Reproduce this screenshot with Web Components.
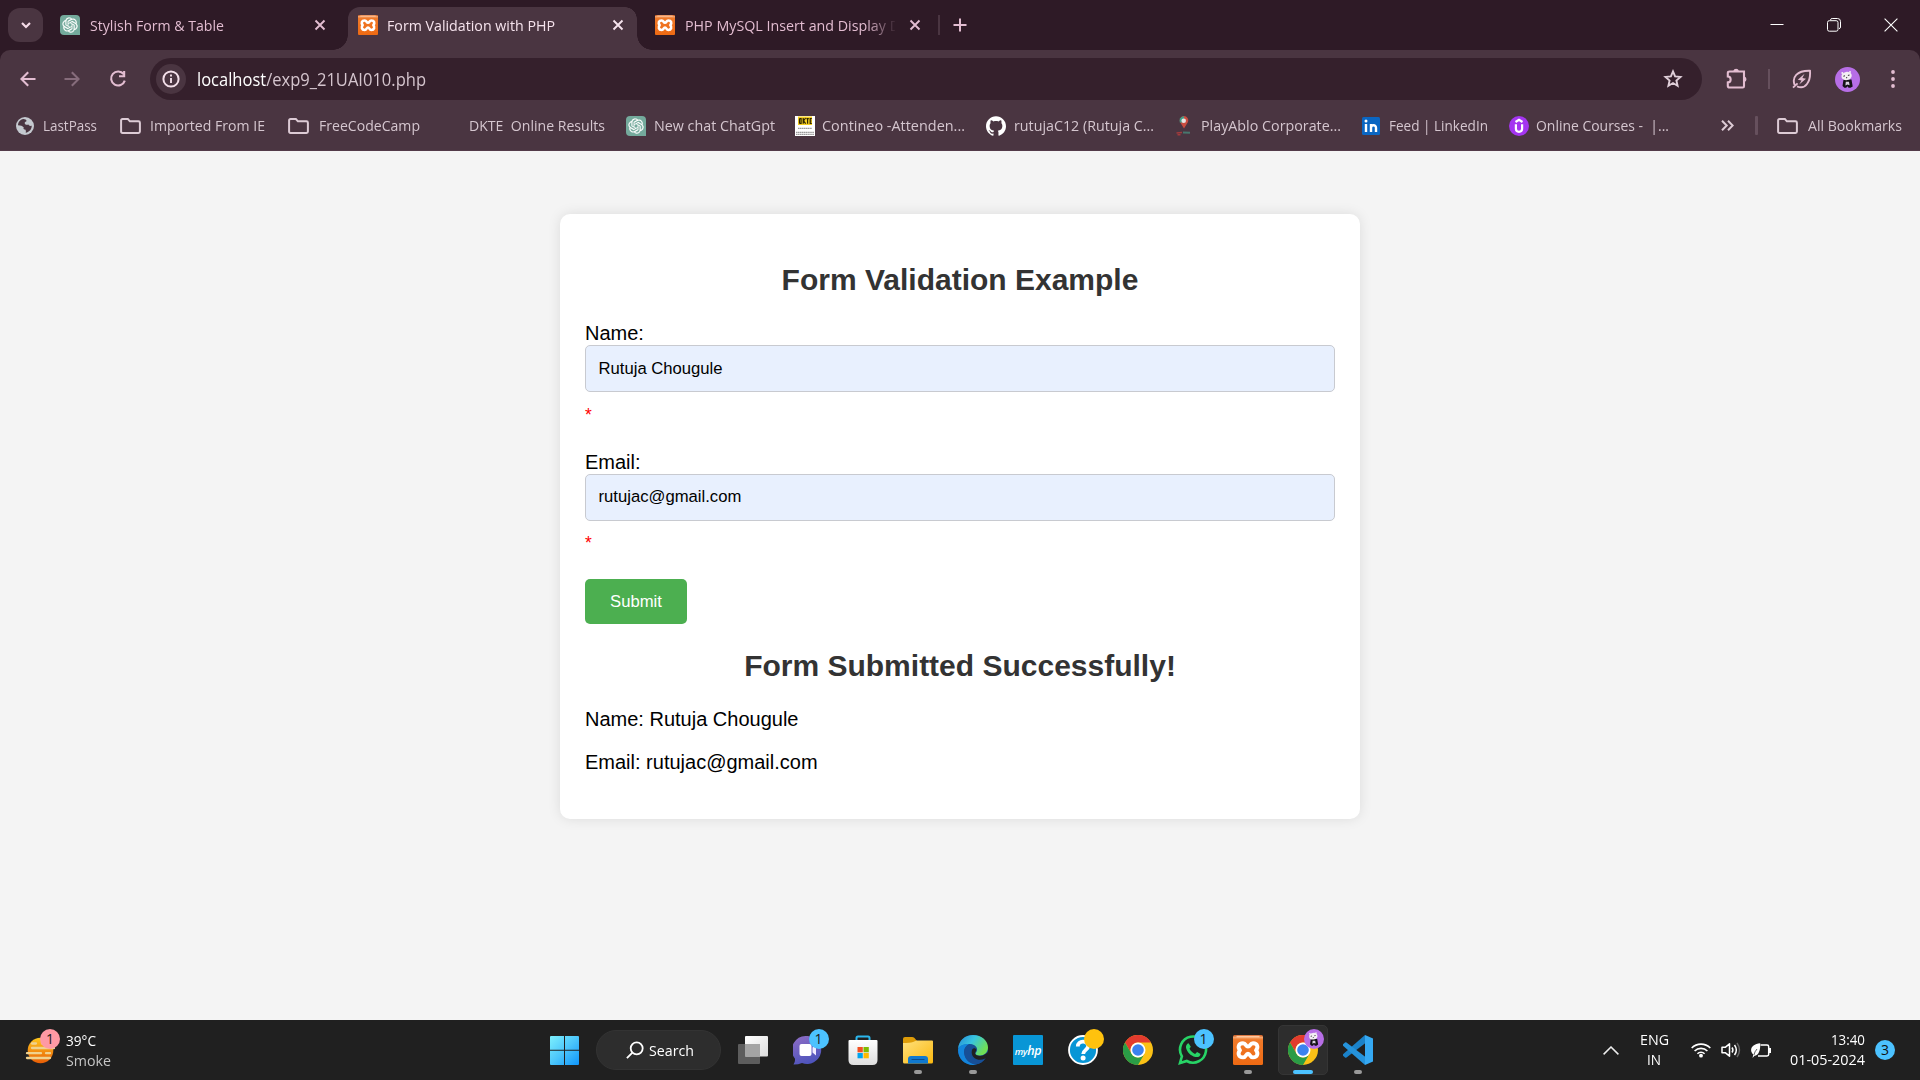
<!DOCTYPE html>
<html lang="en">
<head>
<meta charset="utf-8">
<title>Form Validation with PHP</title>
<style>
html,body{margin:0;height:100%;overflow:hidden;background:#f4f4f4}
</style>
</head>
<body>
<desktop-screen></desktop-screen>
<script>
const openai='M22.2819 9.8211a5.9847 5.9847 0 0 0-.5157-4.9108 6.0462 6.0462 0 0 0-6.5098-2.9A6.0651 6.0651 0 0 0 4.9807 4.1818a5.9847 5.9847 0 0 0-3.9977 2.9 6.0462 6.0462 0 0 0 .7427 7.0966 5.98 5.98 0 0 0 .511 4.9107 6.051 6.051 0 0 0 6.5146 2.9001A5.9847 5.9847 0 0 0 13.2599 24a6.0557 6.0557 0 0 0 5.7718-4.2058 5.9894 5.9894 0 0 0 3.9977-2.9001 6.0557 6.0557 0 0 0-.7475-7.0729zm-9.022 12.6081a4.4755 4.4755 0 0 1-2.8764-1.0408l.1419-.0804 4.7783-2.7582a.7948.7948 0 0 0 .3927-.6813v-6.7369l2.02 1.1686a.071.071 0 0 1 .038.052v5.5826a4.504 4.504 0 0 1-4.4945 4.4944zm-9.6607-4.1254a4.4708 4.4708 0 0 1-.5346-3.0137l.142.0852 4.783 2.7582a.7712.7712 0 0 0 .7806 0l5.8428-3.3685v2.3324a.0804.0804 0 0 1-.0332.0615L9.74 19.9502a4.4992 4.4992 0 0 1-6.1408-1.6464zM2.3408 7.8956a4.485 4.485 0 0 1 2.3655-1.9728V11.6a.7664.7664 0 0 0 .3879.6765l5.8144 3.3543-2.0201 1.1685a.0757.0757 0 0 1-.071 0l-4.8303-2.7865A4.504 4.504 0 0 1 2.3408 7.872zm16.5963 3.8558L13.1038 8.364 15.1192 7.2a.0757.0757 0 0 1 .071 0l4.8303 2.7913a4.4944 4.4944 0 0 1-.6765 8.1042v-5.6772a.79.79 0 0 0-.407-.667zm2.0107-3.0231l-.142-.0852-4.7735-2.7818a.7759.7759 0 0 0-.7854 0L9.409 9.2297V6.8974a.0662.0662 0 0 1 .0284-.0615l4.8303-2.7866a4.4992 4.4992 0 0 1 6.6802 4.66zM8.3065 12.863l-2.02-1.1638a.0804.0804 0 0 1-.038-.0567V6.0742a4.4992 4.4992 0 0 1 7.3757-3.4537l-.142.0805L8.704 5.459a.7948.7948 0 0 0-.3927.6813zm1.0976-2.3654l2.602-1.4998 2.6069 1.4998v2.9994l-2.5974 1.4997-2.6067-1.4997Z';
const svg=(w,h,body,vb)=>`<svg width="${w}" height="${h}" viewBox="${vb||`0 0 ${w} ${h}`}" fill="none">${body}</svg>`;
const xamppArt='<defs><linearGradient id="x" x2="0" y2="1"><stop stop-color="#c9571c"/><stop offset=".08" stop-color="#f5a46c"/><stop offset=".16" stop-color="#f07a2a"/><stop offset="1" stop-color="#ee6a13"/></linearGradient></defs><rect width="30" height="30" rx="1.5" fill="url(#x)"/><path d="M3.5 1.6h23" stroke="#ffc79e" stroke-width="1.6"/><path d="M10 8.2c3.2 0 2.6 3.4 5 3.4s1.800-3.400 5-3.400c4.500 0 5.600 4 3 7 2.600 3 1.500 7.200-3 7.200-3.200 0-2.600-3.600-5-3.600s-1.800 3.600-5 3.600c-4.500 0-5.600-4.200-3-7.200-2.600-3-1.500-7 3-7z" stroke="#fff" stroke-width="3.900" stroke-linejoin="round"/>';
const chromeArt='<circle cx="15" cy="15" r="15" fill="#fbc116"/><path d="M2 7.500A15 15 0 0 1 28 7.500H15a7.500 7.500 0 0 0-6.500 11.250z" fill="#e33b2e"/><path d="M2 7.500A15 15 0 0 0 15 30l6.500-11.250a7.500 7.500 0 0 1-13 0z" fill="#2a9c46"/><circle cx="15" cy="15" r="7.500" fill="#fff"/><circle cx="15" cy="15" r="5.800" fill="#3b82ef"/>';
const pandaArt='<circle cx="12.500" cy="12.500" r="12.500" fill="#b76ee6"/><path d="M8.500 12.500h8l1.200 7-2.200 1.300h-2l-1-1.600-1.300 1.600H9.300L7.500 19z" fill="#151217"/><path d="M10.800 14.800h3.200l.6 3.400-2.200-.6-2 .8z" fill="#d9cfe0"/><ellipse cx="11.600" cy="9" rx="5.200" ry="4.100" transform="rotate(-10 11.600 9)" fill="#f3eef3"/><circle cx="7.300" cy="5.900" r="1" fill="#f3eef3"/><circle cx="15" cy="5" r="1" fill="#f3eef3"/><path d="M8.400 9.200l1.600-.4M12.900 8.400l1.600-.3M11 10.800l1.200-.2" stroke="#151217" stroke-width=".9"/>';
const ICONS={
 down:svg(12,12,'<path d="M2 4l4 4 4-4" stroke="#f5dbe8" stroke-width="2.200"/>'),
 gpt:svg(20,20,`<path d="M4 0h12a4 4 0 0 1 4 4v16H4a4 4 0 0 1-4-4V4a4 4 0 0 1 4-4z" fill="#74aa9c"/><g transform="translate(2.400 2.400) scale(.635)"><path fill="#fff" stroke="#fff" stroke-width=".3" d="${openai}"/></g>`),
 xamppS:svg(20,20,xamppArt,'0 0 30 30'),
 xampp:svg(30,30,xamppArt),
 close:svg(12,12,'<path d="M1.500 1.500l9 9m0-9l-9 9" stroke="currentColor" stroke-width="1.900"/>'),
 plus:svg(14,14,'<path d="M7 .5v13M.5 7h13" stroke="#e3bdd1" stroke-width="2"/>'),
 min:svg(14,14,'<path d="M.5 6.500h13" stroke="#fff"/>'),
 restore:svg(14,14,'<path d="M3.500 2V1.800Q3.800.5 5.200.5H10.500Q13.500.5 13.500 3.500V9Q13.500 10.400 12 10.700" stroke="#fff"/><rect x=".5" y="2.700" width="10.500" height="10.500" rx="1.800" stroke="#fff"/>'),
 winx:svg(14,14,'<path d="M.6.6l12.800 12.800m0-12.800L.6 13.400" stroke="#fff" stroke-width="1.100"/>'),
 back:svg(16,16,'<path d="M15.500 8H1.800M8.200 1.200L1.400 8l6.800 6.800" stroke="#e3bdd1" stroke-width="2.100"/>'),
 fwd:svg(16,16,'<path d="M.5 8h13.700M7.800 1.200L14.600 8l-6.800 6.800" stroke="#866c7b" stroke-width="2.100"/>'),
 reload:svg(18,18,'<path d="M14.700 4.200A7 7 0 1 0 15.800 10.600" stroke="#e3bdd1" stroke-width="2.100"/><path d="M16.200 1v6.300H10V5.200h4.100V1z" fill="#e3bdd1"/>'),
 info:svg(18,18,'<circle cx="9" cy="9" r="7.600" stroke="#f3dfe9" stroke-width="2"/><path d="M9 8v5M9 4.600v2" stroke="#f3dfe9" stroke-width="1.900"/>'),
 star:svg(20,20,'<path d="M10 2.400l2.100 5 5.400.5-4.100 3.600 1.200 5.300-4.600-2.800-4.600 2.800 1.200-5.300L2.500 7.900l5.400-.5z" stroke="#e0cfd9" stroke-width="1.900"/>'),
 puzzle:svg(22,22,'<path d="M3.500 3.500h14.500v14.800q0 1.200-1.200 1.200H3.500q-1.700 0-1.700-1.500v-3.600c3.800-.2 3.800-5.700 0-5.900V4.900q0-1.400 1.700-1.400z" stroke="#e3bdd1" stroke-width="2.100"/><path d="M7.300 3a2.900 2.900 0 0 1 5.600 0zM18.500 8.500a2.900 2.900 0 0 1 0 5.500z" fill="#e3bdd1"/>'),
 leaf:svg(20,20,'<path d="M2.600 15.800C-.2 8.600 4.600 1.400 18 1.800c.8 10.500-4.500 19.500-13 15.500M1 18.600l4.600-4.200" stroke="#e3bdd1" stroke-width="1.900"/><path d="M12.500 4.800L5.800 10.700l3.700.8-2.300 4 6.800-5.700-3.600-.9z" fill="#e3bdd1"/>'),
 panda:svg(25,25,pandaArt),
 dots:svg(4,18,'<circle cx="2" cy="2" r="1.900" fill="#e3bdd1"/><circle cx="2" cy="9" r="1.900" fill="#e3bdd1"/><circle cx="2" cy="16" r="1.900" fill="#e3bdd1"/>'),
 globe:svg(18,18,'<circle cx="9" cy="9" r="9" fill="#c4c9cf"/><path d="M7.500 2.100C3.800 2.700 2.200 5.300 2 8.300c2.800.2 4.400.4 5.800 2.200-.9 1.200 0 2.300 1.800 2.300.2 1 .5 2 .1 3 3.800-.7 6.200-3.800 6-7-1.700.5-3-.2-3.300-1.300-1.700.8-3.800.2-3.700-1.500 0-1.800 2.300-1.200 1.700-2.600-.4-.8-1.500-.8-2.900-1.300z" fill="#4a3541"/>'),
 folder:svg(21,16,'<path d="M1.100 2.500Q1.100 1.100 2.500 1.100h5.400l2 2.200h8.600q1.400 0 1.400 1.400v8.800q0 1.400-1.400 1.400h-16q-1.400 0-1.400-1.400z" stroke="#ddcbd5" stroke-width="2"/>'),
 dkte:svg(20,20,'<rect width="20" height="20" fill="#fff"/><rect x="3" y="0.500" width="14" height="8.500" fill="#f6cf22"/><path d="M4.500 2.500v5M4.500 2.700h1.600v4.600H4.500M8.200 2v5.700M10.600 2L8.500 5l2.200 2.600M11.400 2.700h2.400M12.600 2.700v5M16.800 2.700h-1.600v4.600h1.600M15 5h1.500" stroke="#302600" stroke-width="1.200"/><path d="M3 12.300h14M1 16.300h18M1 18.400h18" stroke="#999" stroke-width="1.200" stroke-dasharray="1.500 .4"/>'),
 github:svg(20,20,'<path fill="#fff" d="M12 .297c-6.630 0-12 5.373-12 12 0 5.303 3.438 9.800 8.205 11.385.6.113.82-.258.82-.577 0-.285-.010-1.040-.015-2.040-3.338.724-4.042-1.610-4.042-1.610C4.422 18.070 3.633 17.700 3.633 17.700c-1.087-.744.084-.729.084-.729 1.205.084 1.838 1.236 1.838 1.236 1.070 1.835 2.809 1.305 3.495.998.108-.776.417-1.305.760-1.605-2.665-.3-5.466-1.332-5.466-5.930 0-1.310.465-2.380 1.235-3.220-.135-.303-.540-1.523.105-3.176 0 0 1.005-.322 3.300 1.230.960-.267 1.980-.399 3-.405 1.020.006 2.040.138 3 .405 2.280-1.552 3.285-1.230 3.285-1.230.645 1.653.240 2.873.120 3.176.765.840 1.230 1.910 1.230 3.220 0 4.610-2.805 5.625-5.475 5.920.420.360.810 1.096.810 2.220 0 1.606-.015 2.896-.015 3.286 0 .315.210.690.825.570C20.565 22.092 24 17.592 24 12.297c0-6.627-5.373-12-12-12"/>','0 0 24 24'),
 play:svg(20,20,'<path d="M10 12.500L6 6a4.300 4.300 0 1 1 8 0z" fill="#c94d40"/><path d="M5.800 6.500A4.500 4.500 0 0 1 10 .3v6z" fill="#3f9e87"/><circle cx="9.700" cy="4.700" r="2.300" fill="#e9e5e4"/><path d="M2.500 17l5.500-.5M3.500 18.800h3" stroke="#a23b3d" stroke-width="1.600"/><path d="M9 16.500l7 .3" stroke="#47776e" stroke-width="1.900"/>'),
 linkedin:svg(18,18,'<rect width="18" height="18" rx="1.500" fill="#0a66c2"/><path d="M4 7v8M9 15V7M9 10.800c0-3.200 5-3.600 5 0V15" stroke="#fff" stroke-width="2.400"/><circle cx="4" cy="4" r="1.500" fill="#fff"/>'),
 udemy:svg(20,20,'<circle cx="10" cy="10" r="10" fill="#a435f0"/><path d="M6.500 6l3.500-2.200L13.500 6M6.900 8.200v4.600c0 4 6.200 4 6.200 0V8.200" stroke="#fff" stroke-width="2.200"/>'),
 more:svg(13,11,'<path d="M1 .8l4.700 4.700L1 10.200M7 .8l4.700 4.700L7 10.200" stroke="#ddcbd5" stroke-width="2"/>'),
 win:svg(29,29,'<defs><linearGradient id="w" x2="1" y2="1"><stop stop-color="#7df0fd"/><stop offset=".5" stop-color="#4cc6fb"/><stop offset="1" stop-color="#0f95fb"/></linearGradient></defs><path fill="url(#w)" d="M1 0h13v13.800H0V1q0-1 1-1zM15 0h13q1 0 1 1v12.800H15zM0 14.800h14V29H1q-1 0-1-1zM15 14.800h14V28q0 1-1 1H15z"/>'),
 search:svg(18,18,'<circle cx="10.700" cy="7.300" r="6" stroke="#fff" stroke-width="1.800"/><path d="M6.400 11.600L.9 17.100" stroke="#fff" stroke-width="1.900"/>'),
 task:svg(30,28,'<defs><linearGradient id="t" x2="1" y2="1"><stop stop-color="#fff"/><stop offset="1" stop-color="#dcdcdc"/></linearGradient></defs><rect y="8" width="22" height="20" rx="1" fill="#5d5d5d"/><rect x="7" width="23" height="20.500" rx="1" fill="url(#t)"/><rect x="7" y="8" width="15" height="12.500" fill="#a4a4a4"/>'),
 chat:svg(30,30,'<defs><linearGradient id="c" x1=".2" x2=".6" y2="1"><stop stop-color="#8c6cc4"/><stop offset="1" stop-color="#4b53bc"/></linearGradient></defs><path d="M14.500 1A14 14 0 1 1 9 28q-4 1.600-8.500 1.500 2-3 1.400-6A14 14 0 0 1 14.500 1z" fill="url(#c)"/><rect x="6.500" y="9" width="12" height="12" rx="2" fill="#fff"/><path d="M19.500 12.600l3.500-3v11l-3.500-3z" fill="#f1ecff"/>'),
 store:svg(30,30,'<path d="M8.500 6V3q0-1.500 1.500-1.500h10q1.500 0 1.500 1.500v3" stroke="#2bb7ee" stroke-width="2"/><defs><linearGradient id="s" x2="0" y2="1"><stop stop-color="#fff"/><stop offset="1" stop-color="#dedede"/></linearGradient></defs><path d="M1.500 5h27q1 0 1 1v19q0 5-5 5h-19Q.5 30 .5 25V6q0-1 1-1z" fill="url(#s)"/><path d="M9.500 12h5.300v5.300H9.500z" fill="#f25022"/><path d="M15.500 12h5.300v5.300h-5.300z" fill="#7fba00"/><path d="M9.500 18h5.300v5.300H9.500z" fill="#00a4ef"/><path d="M15.500 18h5.300v5.300h-5.300z" fill="#ffb900"/>'),
 explorer:svg(30,30,'<defs><linearGradient id="e" x2="1" y2="1"><stop stop-color="#ffe07c"/><stop offset="1" stop-color="#fbb90f"/></linearGradient></defs><path d="M0 4q0-2 2-2h7q1.500 0 2.500 1l2.500 3v5H0z" fill="#de9c08"/><path d="M0 8q7 0 10-1l3.500-1.500H29q1 0 1 1V27q0 1.500-1.500 1.500h-27Q0 28.500 0 27z" fill="url(#e)"/><path d="M5 28.500V24q0-3 3-3h14q3 0 3 3v4.500z" fill="#1079cf"/><path d="M9 24.500h12" stroke="#0b4c8c" stroke-width="1.200" stroke-linecap="round"/>'),
 edge:svg(30,30,'<defs><linearGradient id="g" x2="1" y2=".5"><stop stop-color="#2589d6"/><stop offset=".5" stop-color="#38c5df"/><stop offset="1" stop-color="#70df55"/></linearGradient></defs><circle cx="15" cy="15" r="15" fill="#174f8f"/><path d="M0 14C1 5 7 0 15 0c9 0 15 6 15 12.500 0 5-4 8-8 8-3.500 0-5-1.300-4.300-2.600 4-5-1-9-6-9C6 8.900 1 11 0 14z" fill="url(#g)"/><path d="M0 14.500C1 10.500 5.500 8.800 11 8.900c-4 2-5.600 5.600-4.700 9.800 1 5.500 5.500 9.900 12 10.900C8.500 31.500 0 25 0 14.500z" fill="#1385dc"/><path d="M13.500 14.500c-2.800 4.500.8 10.500 7 10.500 2.200 0 4-.5 6-1.600l1-.3c-2.400 4-5.700 6-9.800 6.500C10.500 28.500 6 23.500 6.200 17c.3-5.300 4-7.700 6.800-7.500 4 .5 4.500 3 .5 5z" fill="#174f97"/><path d="M14.300 14.200c1-1.500 3.300-1.400 3.900.4.200 1-.4 2-1 3-.8 1.600 1.200 3.300 4.800 3.300 3.200 0 5.600-1.500 8-3.900v4l-2.700 2.500c-6 2.800-12.800.8-13.600-5.500-.1-1.400.1-2.700.6-3.800z" fill="#202020"/><path d="M28.500 20.800L31 19v8l-3.500 3-4-1.500 4.500-5z" fill="#202020"/>'),
 myhp:svg(30,30,'<rect width="30" height="30" rx="1" fill="#0896d6"/>'),
 help:svg(30,30,'<circle cx="15" cy="15" r="14" fill="#0896d6" stroke="#fff" stroke-width="1.800"/><path d="M9.800 11.500C9.500 5 20.300 5 20.200 11c0 3.800-5 4-5 8" stroke="#fff" stroke-width="3.800"/><circle cx="15.100" cy="23" r="2.500" fill="#fff"/>'),
 chrome:svg(30,30,chromeArt),
 whatsapp:svg(30,30,'<path d="M2 28l1.900-6.700A13 13 0 1 1 8.800 26z" stroke="#27d466" stroke-width="2.600"/><path d="M10.600 8.200l2.200 3.600-1.300 2c1.400 2.600 3 4 5.600 5.100l2-1.800 3.500 1.800c-.6 2.700-2.800 3.700-5.300 3C12.500 20.700 9 17 8 12.700c-.2-2 .7-4.100 2.600-4.500z" fill="#27d466"/>'),
 vscode:svg(30,30,'<path d="M22 0L0 19.300q-.7.700 0 1.500l2 1.800q.7.500 1.500 0L22.500 8z" fill="#1b82c9"/><path d="M22 30L0 10.700q-.7-.7 0-1.500l2-1.800q.7-.5 1.500 0L22.500 22z" fill="#2593dc"/><path d="M22 0l8 3.600v22.800L22 30z" fill="#35a9f3"/>'),
 weather:svg(30,28,'<defs><linearGradient id="q" x2="0" y2="1"><stop stop-color="#ffc81e"/><stop offset="1" stop-color="#e85d06"/></linearGradient></defs><circle cx="15.500" cy="14.500" r="12.800" fill="url(#q)"/><path d="M7 7.500h4M17 7.500h12M7 12h22M2 17.200h14M21 17.200h4M2 22h23" stroke="#f0d28e" stroke-width="2.300" stroke-linecap="round"/>'),
 chev:svg(16,9,'<path d="M.6 8.400L8 1l7.400 7.400" stroke="#eee" stroke-width="1.500"/>'),
 wifi:svg(20,16,'<path d="M.7 6A13.200 13.200 0 0 1 19.300 6M3.600 9a9 9 0 0 1 12.800 0M6.400 11.800a5.100 5.100 0 0 1 7.200 0" stroke="#fff" stroke-width="1.600"/><circle cx="10" cy="13.700" r="1.900" fill="#fff"/>'),
 vol:svg(20,16,'<path d="M1 5.300h3.200L8.500 1.800v12.400L4.200 10.700H1z" stroke="#fff" stroke-width="1.500" stroke-linejoin="round"/><path d="M11 5.500q1.800 2.500 0 5M13.500 3q3.700 5 0 10" stroke="#fff" stroke-width="1.500"/><path d="M16 1q5 7 0 14" stroke="#666" stroke-width="1.400"/>'),
 batt:svg(20,15,'<path d="M9.500 2h6.500q1.700 0 1.700 1.700v7.600q0 1.700-1.700 1.700H7" stroke="#fff" stroke-width="1.500"/><path d="M19 5v5" stroke="#fff" stroke-width="2"/><path d="M9.200.2C3 .8-.8 4 .3 8.500q.6 2 2 3L1.500 15l2-2.200C8 12.400 9.500 7 9.200.2z" fill="#fff"/><path d="M6 6Q3.700 8.500 2.900 12" stroke="#202020" stroke-width=".7"/>'),
};
const define=(tag,html,init)=>customElements.define(tag,class extends HTMLElement{
  connectedCallback(){
    if(this.shadowRoot)return;
    const root=this.attachShadow({mode:'open'});
    const t=document.createElement('template');
    t.innerHTML=html;
    root.append(t.content.cloneNode(true));
    if(init)init.call(this,root);
  }
});

define('desktop-screen',`<style>
:host{display:flex;flex-direction:column;width:1920px;height:1080px;overflow:hidden;font-family:"Open Sans","Noto Sans",sans-serif;font-size:15px}
</style><browser-tabs></browser-tabs><browser-toolbar></browser-toolbar><bookmark-bar></bookmark-bar><page-view></page-view><task-bar></task-bar>`);

define('browser-tabs',`<style>
:host{display:flex;height:50px;background:#2e1a26;box-sizing:border-box;padding-left:8px;align-items:flex-start;color:#e3bdd1}
.menu{width:35px;height:34px;margin-top:8px;border-radius:12px;background:#4a3541;display:flex;align-items:center;justify-content:center}
.sep{width:2px;height:20px;margin:15px 0 0;background:#4a3541}
.plus{margin:18px 0 0 13px;display:flex}
.controls{margin-left:auto;display:flex;gap:43px;padding:18px 22px 0 0}
</style>
<div class="menu"><ui-icon name="down"></ui-icon></div>
<browser-tab icon="gpt" style="width:297px;margin-left:7px"><fit-text w="134">Stylish Form &amp; Table</fit-text></browser-tab>
<browser-tab icon="xamppS" active style="width:297px;margin-left:1px"><fit-text w="168">Form Validation with PHP</fit-text></browser-tab>
<browser-tab icon="xamppS" fade style="width:293px"><fit-text w="215">PHP MySQL Insert and Display D</fit-text></browser-tab>
<div class="sep"></div><div class="plus"><ui-icon name="plus"></ui-icon></div>
<div class="controls"><ui-icon name="min"></ui-icon><ui-icon name="restore"></ui-icon><ui-icon name="winx"></ui-icon></div>`);

define('browser-tab',`<style>
:host{display:flex;align-items:center;box-sizing:border-box;height:43px;margin-top:7px;padding:0 0 7px 10px;border-radius:12px 12px 0 0}
.label{margin-left:10px;flex:none;width:210px;overflow:hidden;line-height:22px}
.x{margin-left:auto;display:flex;margin-right:21px}
:host([active]){background:linear-gradient(#4a3541,#4a3541) 0 0/289px 100% no-repeat;color:#f6e3ed;position:relative;width:297px}
:host([active]) .label{margin-left:9px}
:host([fade]) .x{margin-right:17px}
:host([active])::before,:host([active])::after{content:"";position:absolute;bottom:0;width:15px;height:15px}
:host([active])::before{left:-15px;background:radial-gradient(circle at 0 0,transparent 14.5px,#4a3541 15px)}
:host([active])::after{left:289px;background:radial-gradient(circle at 100% 0,transparent 14.5px,#4a3541 15px)}
.corner{display:none}
:host([active]) .corner{display:block;position:absolute;left:277px;top:0;width:12px;height:12px;background:radial-gradient(circle at 0 100%,transparent 11.500px,#2e1a26 12px)}
:host([fade]) .label{-webkit-mask:linear-gradient(90deg,#000 86%,transparent 101%);mask:linear-gradient(90deg,#000 86%,transparent 101%)}
</style><ui-icon></ui-icon><span class="label"><slot></slot></span><span class="x"><ui-icon name="close"></ui-icon></span><i class="corner"></i>`,
function(r){r.querySelector('ui-icon').setAttribute('name',this.getAttribute('icon'))});

define('browser-toolbar',`<style>
:host{display:block;height:58px;background:#2e1a26}
.bar{height:58px;background:#4a3541;border-radius:10px 10px 0 0;display:flex;align-items:center;box-sizing:border-box;padding:0 25px 0 20px}
.fwd{margin-left:28px}.re{margin-left:29px}
.omni{flex:none;margin-left:23px;width:1552px;height:42px;border-radius:21px;background:#35202c;display:flex;align-items:center;box-sizing:border-box;padding:0 19px 0 6px;color:#d4c4cd;font-size:17.500px}
.info{width:30px;height:30px;border-radius:50%;background:#4a3541;display:flex;align-items:center;justify-content:center;margin-right:10.500px}
b{font-weight:400;color:#fff}.star{margin-left:auto}
.pz{margin-left:24px}.sep{width:2px;height:20px;background:#66505d;margin:0 22px 0 20px}.av{margin:0 31px 0 23px}
</style><div class="bar"><ui-icon name="back"></ui-icon><ui-icon class="fwd" name="fwd"></ui-icon><ui-icon class="re" name="reload"></ui-icon>
<div class="omni"><div class="info"><ui-icon name="info"></ui-icon></div><fit-text w="229"><b>localhost</b>/exp9_21UAI010.php</fit-text><ui-icon class="star" name="star"></ui-icon></div>
<ui-icon class="pz" name="puzzle"></ui-icon><div class="sep"></div><ui-icon name="leaf"></ui-icon><ui-icon class="av" name="panda"></ui-icon><ui-icon name="dots"></ui-icon></div>`);

define('bookmark-bar',`<style>
:host{display:flex;height:43px;background:#4a3541;color:#d5c6cf;box-sizing:border-box;padding:0 0 7px 16px;align-items:center;border-bottom:1px solid #523a48}
.sep{width:3px;height:19px;background:#66505d;margin:0 19px 0 21px;border-radius:1px}
</style>
<book-mark icon="globe" gap="9" w="104" t="54">LastPass</book-mark>
<book-mark icon="folder" gap="9" w="168" t="115">Imported From IE</book-mark>
<book-mark icon="folder" gap="10" w="181" t="101">FreeCodeCamp</book-mark>
<book-mark w="157" t="136">DKTE&nbsp; Online Results</book-mark>
<book-mark icon="gpt" gap="8" w="169" t="121">New chat ChatGpt</book-mark>
<book-mark icon="dkte" gap="7" w="191" t="143">Contineo -Attenden...</book-mark>
<book-mark icon="github" gap="8" w="188" t="140">rutujaC12 (Rutuja C...</book-mark>
<book-mark icon="play" gap="7" w="188" t="140">PlayAblo Corporate...</book-mark>
<book-mark icon="linkedin" gap="9" w="147" t="99">Feed | LinkedIn</book-mark>
<book-mark icon="udemy" gap="7" w="212" t="133">Online Courses -&nbsp; |...</book-mark>
<ui-icon name="more"></ui-icon><div class="sep"></div>
<book-mark icon="folder" gap="10" w="140" t="94">All Bookmarks</book-mark>`);

define('book-mark',`<style>:host{display:flex;align-items:center;flex:none;line-height:22px}fit-text{margin-bottom:2px}</style><ui-icon></ui-icon><fit-text><slot></slot></fit-text>`,
function(r){
  const i=r.querySelector('ui-icon'),a=n=>this.getAttribute(n);
  this.style.width=a('w')+'px';
  if(a('icon')){i.setAttribute('name',a('icon'));i.style.marginRight=a('gap')+'px'}else i.remove();
  r.querySelector('fit-text').setAttribute('w',a('t'));
});

define('page-view',`<style>
:host{display:flex;flex:1;justify-content:center;align-items:flex-start;background:#f4f4f4;padding-top:63px;font:20px/22px "Liberation Sans",Arial,sans-serif;color:#000}
.card{width:800px;height:605px;box-sizing:border-box;background:#fff;border-radius:10px;padding:49px 25px 0;box-shadow:0 0 12.500px rgba(0,0,0,.1)}
h2{margin:0;font-size:30px;line-height:34px;text-align:center;color:#333}
form{margin-top:25px}
.button{display:flex;align-items:center;justify-content:center;width:102px;height:45px;border:0;border-radius:5px;background:#4caf50;color:#fff;font:16.667px "Liberation Sans",Arial,sans-serif;padding:0;margin-bottom:25px}
p{margin:25px 0 0;line-height:23px}p+p{margin-top:20px}
</style><div class="card"><h2>Form Validation Example</h2><form>
<form-field label="Name:" style="height:129px">Rutuja Chougule</form-field><form-field label="Email:" style="height:128px;--line:43px;--gap:12px">rutujac@gmail.com</form-field>
<button class="button" type="button">Submit</button></form>
<h2>Form Submitted Successfully!</h2><p>Name: Rutuja Chougule</p><p>Email: rutujac@gmail.com</p></div>`);

define('form-field',`<style>
:host{display:block}
label{display:block;height:23px;line-height:22px}
.box{height:47px;box-sizing:border-box;border:1px solid #c8cad0;border-radius:5px;background:#e8f0fe;padding:0 12.500px;font-size:16.667px;line-height:var(--line,45px)}
.err{display:block;color:red;font-size:17.500px;line-height:20px;margin-top:var(--gap,13px)}
</style><label></label><div class="box"><slot></slot></div><span class="err">*</span>`,
function(r){r.querySelector('label').textContent=this.getAttribute('label')});

define('task-bar',`<style>
:host{display:flex;height:60px;background:#202020;color:#fff;align-items:center;position:relative}
.weather{display:flex;width:550px;box-sizing:border-box;padding-left:25px;line-height:20px;align-items:center}
.wi{position:relative;display:flex;margin-right:11px}
.wi task-badge{left:15px;top:-7px}
.g{color:#c5c5c5}
.search{width:125px;height:40px;box-sizing:border-box;border-radius:20px;background:#2d2d2d;border:1px solid #333;margin:0 4.500px 0 17px;display:flex;align-items:center;padding-left:29px}
.search fit-text{margin-left:5px}
.tray{margin-left:auto;display:flex;align-items:center;line-height:20px}
.lang{display:flex;flex-direction:column;align-items:center;width:30px;margin:0 22px 0 20px}
.lang,.time{margin-bottom:2px!important}
.time{display:flex;flex-direction:column;align-items:flex-end;width:76px;margin:0 10px 0 18px}
.tray>ui-icon+ui-icon{margin-left:10px}
.note{width:20px;height:20px;border-radius:50%;background:#4cc2ff;color:#111;text-align:center;font-size:14px;margin-right:25px}
</style>
<div class="weather"><div class="wi"><ui-icon name="weather"></ui-icon><task-badge color="#ff99a4">1</task-badge></div><div><fit-text w="30">39°C</fit-text><fit-text class="g" w="45">Smoke</fit-text></div></div>
<ui-icon name="win"></ui-icon>
<div class="search"><ui-icon name="search"></ui-icon><fit-text w="45">Search</fit-text></div>
<task-app icon="task"></task-app><task-app icon="chat" badge="1"></task-app><task-app icon="store"></task-app><task-app icon="explorer" open></task-app><task-app icon="edge" open></task-app><task-app icon="myhp"><span style="font:italic 600 9.500px 'Open Sans',sans-serif;letter-spacing:-.3px">my<span style="font-size:12.500px">hp</span></span></task-app><task-app icon="help" badge="" color="#ffc20e"></task-app><task-app icon="chrome"></task-app><task-app icon="whatsapp" badge="1"></task-app><task-app icon="xampp" open></task-app><task-app icon="chrome" active></task-app><task-app icon="vscode" open></task-app>
<div class="tray"><ui-icon name="chev"></ui-icon><div class="lang"><fit-text w="29">ENG</fit-text><fit-text w="14">IN</fit-text></div>
<ui-icon name="wifi"></ui-icon><ui-icon name="vol"></ui-icon><ui-icon name="batt"></ui-icon>
<div class="time"><fit-text w="34">13:40</fit-text><fit-text w="75">01-05-2024</fit-text></div><div class="note">3</div></div>`);

define('task-badge',`<style>:host{position:absolute;left:15.500px;top:-6px;width:20px;height:20px;border-radius:50%;color:#1a1a1a;font-size:14px;line-height:20px;text-align:center}</style><slot></slot>`,
function(){this.style.background=this.getAttribute('color')||'#4cc2ff'});

define('task-app',`<style>
:host{display:flex;width:55px;height:60px;align-items:center;justify-content:center;position:relative;flex:none}
.i{position:relative;display:flex;width:30px;height:30px;align-items:center;justify-content:center}
.over{position:absolute;inset:0;display:flex;align-items:center;justify-content:center;white-space:nowrap}
:host([open])::after{content:"";position:absolute;left:23.500px;top:50px;width:8px;height:4px;border-radius:2px;background:#999}
:host([active])::before{content:"";position:absolute;left:2.500px;top:5px;width:50px;height:50px;box-sizing:border-box;border:1px solid #353535;border-radius:5px;background:#2d2d2d}
:host([active])::after{content:"";position:absolute;left:17.500px;top:50px;width:20px;height:4px;border-radius:2px;background:#4cc2ff}
.p{position:absolute;left:15.500px;top:-6px;width:20px;height:20px}
</style><div class="i"><ui-icon></ui-icon><div class="over"><slot></slot></div></div>`,
function(r){
  const box=r.querySelector('.i');
  r.querySelector('ui-icon').setAttribute('name',this.getAttribute('icon'));
  if(this.hasAttribute('badge')){
    const b=document.createElement('task-badge');
    b.textContent=this.getAttribute('badge');
    if(this.getAttribute('color'))b.setAttribute('color',this.getAttribute('color'));
    box.append(b);
  }
  if(this.hasAttribute('active'))box.insertAdjacentHTML('beforeend',`<div class="p">${svg(20,20,pandaArt,'0 0 25 25')}</div>`);
});

define('ui-icon',`<style>:host{display:flex;flex:none}svg{display:block}</style>`,
function(r){r.append(document.createRange().createContextualFragment(ICONS[this.getAttribute('name')]||''))});

/* Condenses a label horizontally so that it occupies exactly w pixels. */
define('fit-text',`<style>:host{display:block;flex:none;white-space:nowrap}span{display:inline-block;transform-origin:0 50%}</style><span><slot></slot></span>`,
function(r){
  const s=r.querySelector('span'),w=+this.getAttribute('w');
  const n=s.getBoundingClientRect().width;
  this.style.width=w+'px';
  s.style.transform=`scaleX(${w/n})`;
});
</script>
</body>
</html>
